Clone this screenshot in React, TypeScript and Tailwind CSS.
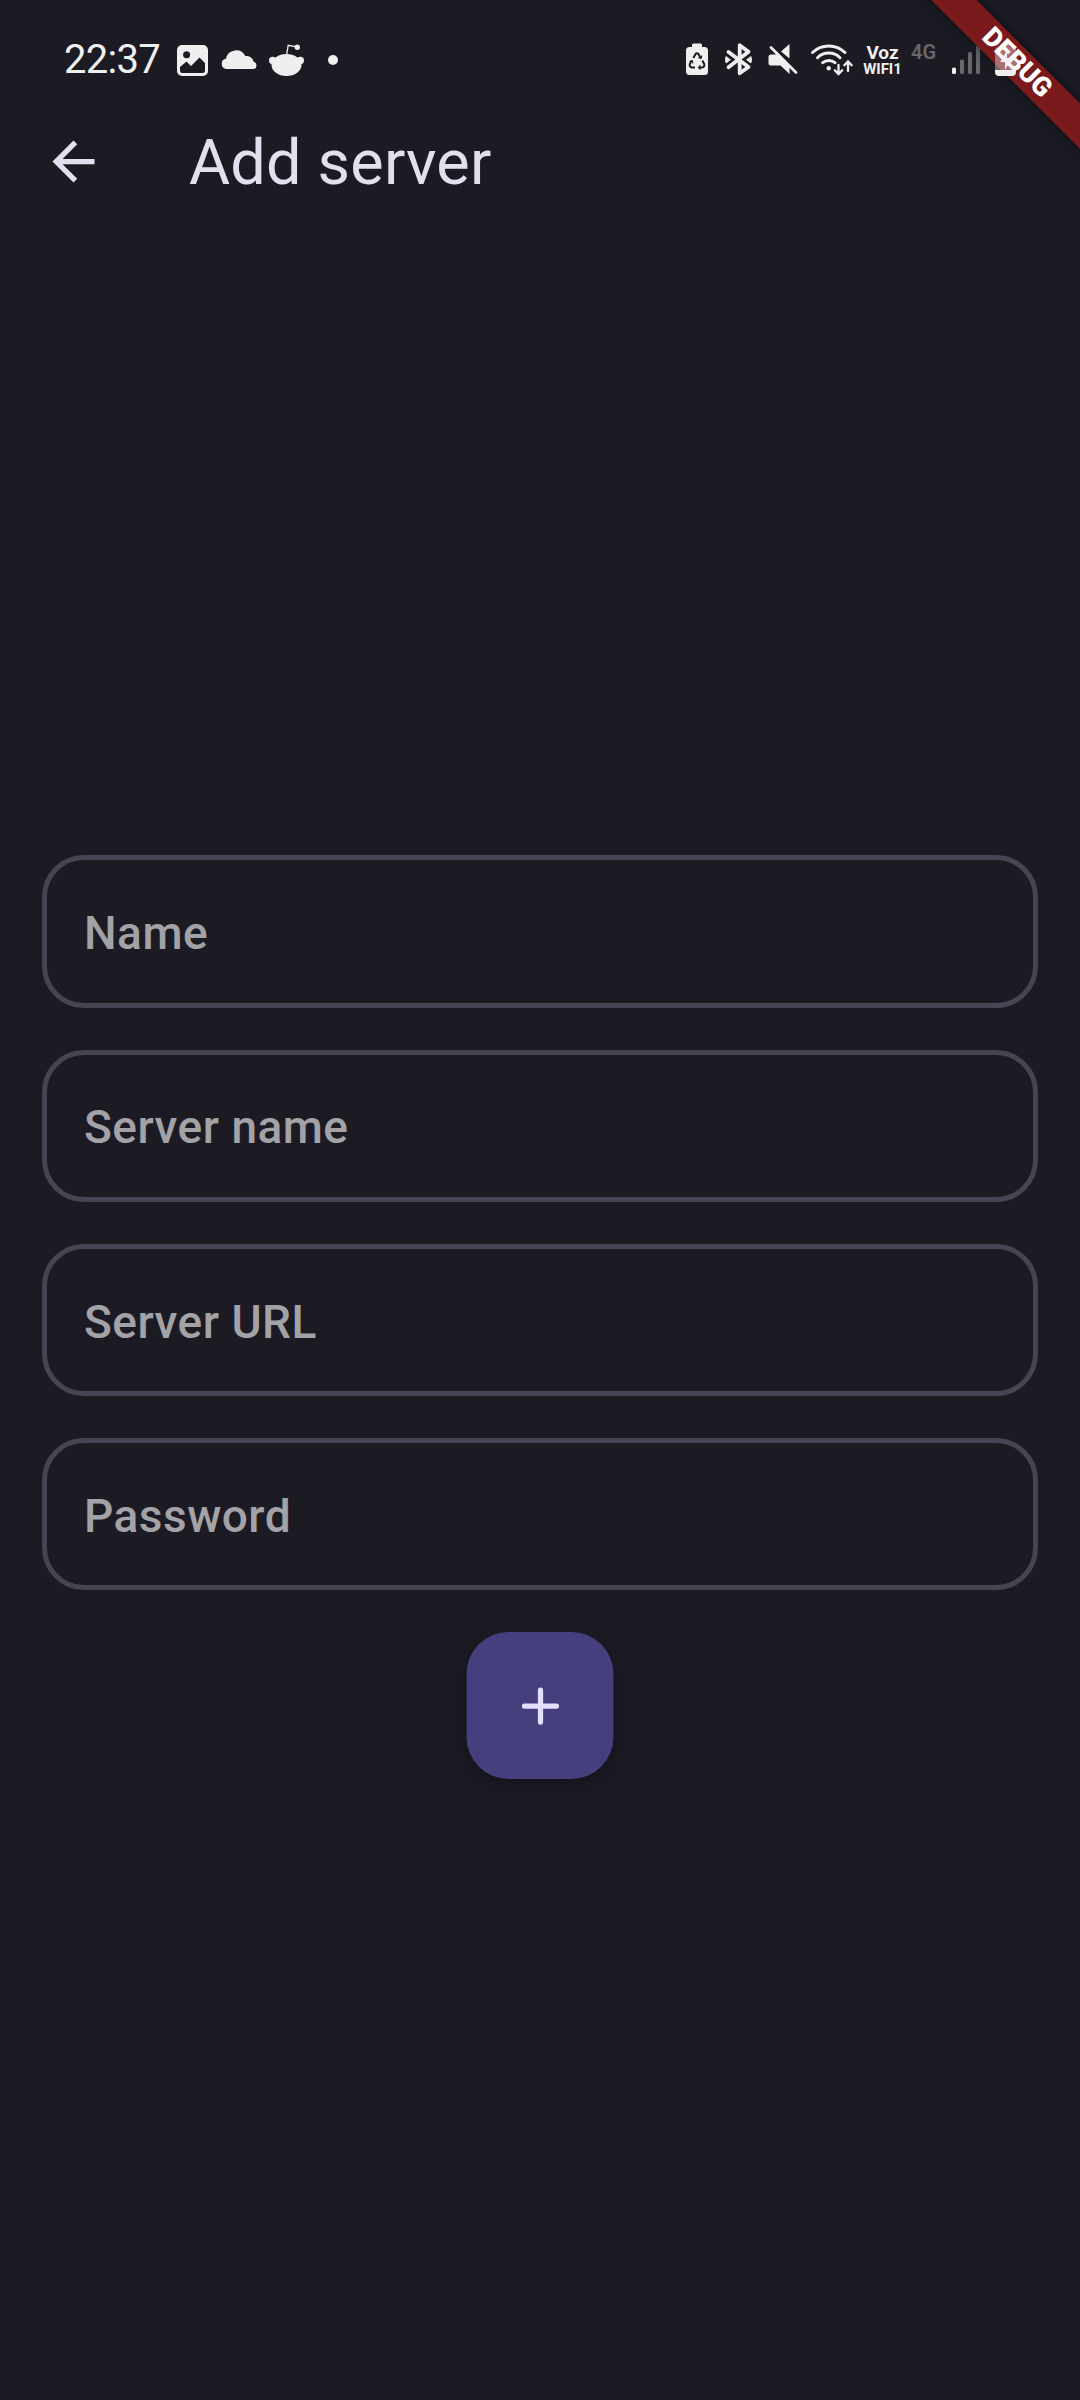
import React from 'react';

function LeftIcons() {
  return (
    <svg className="block h-[80px] w-[188px]" viewBox="168 20 188 80" fill="#efefef">
      <path
        fillRule="evenodd"
        d="M182 45h21a5 5 0 0 1 5 5v21a5 5 0 0 1-5 5h-21a5 5 0 0 1-5-5V50a5 5 0 0 1 5-5ZM186.600 51.200a3.500 3.500 0 1 0 0 7a3.500 3.500 0 1 0 0-7ZM180 67v3.500a2.500 2.500 0 0 0 2.500 2.500h20a2.500 2.500 0 0 0 2.500-2.500V63l-5.500-5.500L191 66l-4.500-4.500Z"
      />
      <path d="M226.500 69a5.200 5.200 0 0 1-.5-10.300a10.300 10.300 0 0 1 19.300-2.700a7.500 7.500 0 0 1 8.400 5.800a3.700 3.700 0 0 1 0 7.200Z" />
      <ellipse cx="286.500" cy="65" rx="15" ry="11" />
      <circle cx="272.700" cy="60.500" r="3.700" />
      <circle cx="300.300" cy="60.500" r="3.700" />
      <circle cx="297.300" cy="47.300" r="2.700" />
      <path d="M286.600 55l1.600-9.700 8.500 1.500" fill="none" stroke="#efefef" strokeWidth="1.300" />
      <circle cx="333" cy="60" r="5" />
    </svg>
  );
}

function RightIcons() {
  return (
    <svg className="block h-[80px] w-[178px]" viewBox="680 20 178 80" fill="#efefef">
      <path d="M693.500 43.500h7a1.500 1.500 0 0 1 1.500 1.500v2h2.500a3.500 3.500 0 0 1 3.500 3.500v21a3.500 3.500 0 0 1-3.500 3.500h-15a3.500 3.500 0 0 1-3.500-3.500v-21a3.500 3.500 0 0 1 3.500-3.500h2.500v-2a1.500 1.500 0 0 1 1.500-1.500Z" />
      <g fill="none" stroke="#1c1b24" strokeWidth="2">
        <path d="M693.300 58l2.300-4q1.400-1.700 2.800 0l2.300 4M702.300 60.500l1.900 3.500q.8 3-2 3.400h-3.200M695 67.400h-3.200q-2.800-.4-2-3.400l1.900-3.500" />
        <path d="M698.300 57.800l3 .5.500-2.800M700.500 65.200l-2 2.200 2 2.100M689.700 61.500l2.500-.8.700 2.600" strokeWidth="1.100" />
      </g>
      <path
        d="M728.500 52L748.500 67L739.700 73.300V45.200L748.500 51.800L728.500 67.200"
        fill="none"
        stroke="#efefef"
        strokeWidth="3.800"
        strokeLinecap="round"
        strokeLinejoin="round"
      />
      <path d="M726 56l5 3.700-5 3.700q-2-3.700 0-7.400ZM751 56l-5 3.700 5 3.700q2-3.700 0-7.400Z" />
      <path d="M771 54.500h6.500l12 11.500V74l-9-8.500H771q-2.500 0-2.500-2.500v-6q0-2.500 2.500-2.500ZM781 51.500l8.500-7.500V58.500Z" />
      <path d="M771 47.500L796 72.500" fill="none" stroke="#efefef" strokeWidth="2.700" strokeLinecap="round" />
      <g fill="none" stroke="#efefef" strokeWidth="3" strokeLinecap="round">
        <path d="M812.500 52.500a23.500 23.500 0 0 1 32.500 0M817.500 57.700a16 16 0 0 1 22.500 0M822.700 62.700a9.500 9.500 0 0 1 12.300 0" />
        <path d="M838.500 65V73.500M834.800 70.200l3.700 3.800 3.700-3.800M848 71V62M844.300 65.300l3.700-3.800 3.700 3.800" strokeWidth="2.300" />
      </g>
      <circle cx="828.700" cy="68.200" r="2.200" />
    </svg>
  );
}

function Signal() {
  return (
    <svg className="block h-[80px] w-[40px]" viewBox="945 20 40 80" fill="#efefef">
      <rect x="952" y="67.500" width="4" height="6.500" rx="1.500" />
      <g opacity="0.36">
        <rect x="960" y="59.500" width="4" height="14.500" rx="1.500" />
        <rect x="968" y="52" width="4" height="22" rx="1.500" />
        <rect x="976" y="45" width="4" height="29" rx="1.500" />
      </g>
    </svg>
  );
}

function StatusBar() {
  return (
    <div className="flex h-[120px] items-start pl-[64px] pt-[20px] text-[#efefef]">
      <div className="w-[104px] text-[40px] leading-[80px] tracking-[-0.700px]">22:37</div>
      <LeftIcons />
      <div className="ml-[324px]">
        <RightIcons />
      </div>
      <div className="ml-[3px] w-[43px] whitespace-nowrap pt-[23px] text-center font-bold">
        <div className="text-[19px] leading-[20px]">Voz</div>
        <div className="text-[15px] leading-[13px]">WIFI1</div>
      </div>
      <div className="ml-[7px] w-[34px] pt-[22px] text-[20px] font-semibold leading-[20px] text-[#69676e]">4G</div>
      <Signal />
    </div>
  );
}

function DebugBanner() {
  return (
    <div className="pointer-events-none absolute right-0 top-0 h-[220px] w-[220px] overflow-hidden">
      <div className="absolute left-[-43px] top-[47.250px] flex h-[31.500px] w-[400px] rotate-45 items-center justify-center bg-[#7a1a1d] text-[26.800px] font-black leading-none text-white shadow-[0_0_16px_rgba(0,0,0,0.5)]">
        DEBUG
      </div>
      <svg className="absolute left-[130px] top-[40px] h-[40px] w-[40px]" viewBox="990 40 40 40" fill="#efefef">
        <path
          fillRule="evenodd"
          fillOpacity="0.4"
          d="M1001 44h9v3h2a4 4 0 0 1 4 4V70H995V51a4 4 0 0 1 4-4h2ZM1007 50l-7 12h5v8l7-12h-5Z"
        />
        <path d="M1007 50l-7 12h5v8l7-12h-5Z" />
        <path d="M995 70h21v2a4 4 0 0 1-4 4h-13a4 4 0 0 1-4-4Z" />
      </svg>
    </div>
  );
}

function Field({ label }: { label: string }) {
  return (
    <div className="flex h-[152.250px] items-center rounded-[42px] border-[5px] border-[#474553] pl-[37px] pt-[4.500px] text-[46px] font-medium tracking-[0.480px] text-[#a3a2a6]">
      {label}
    </div>
  );
}

export default function App() {
  return (
    <div className="relative h-[2400px] w-[1080px] overflow-hidden bg-[#1c1b24] font-[Roboto,sans-serif]">
      <StatusBar />
      <header className="flex h-[84px] items-center">
        <svg className="mb-[2px] ml-[42px] block h-[63px] w-[63px]" viewBox="0 0 24 24" fill="#e4dfef">
          <path d="M20 11H7.830l5.590-5.590L12 4l-8 8 8 8 1.410-1.410L7.830 13H20v-2z" />
        </svg>
        <h1 className="ml-[84px] pt-[2px] text-[63px] leading-[82px] tracking-[0.200px] text-[#e4dfef]">Add server</h1>
      </header>
      <main className="flex flex-col gap-[42px] px-[42px] pt-[651.250px]">
        <Field label="Name" />
        <Field label="Server name" />
        <Field label="Server URL" />
        <Field label="Password" />
        <button className="-translate-x-[0.500px] flex h-[147px] w-[147px] items-center justify-center self-center rounded-[42px] bg-[#453f7e] shadow-[0_8px_20px_rgba(0,0,0,0.3)]">
          <svg className="ml-px mt-px h-[38px] w-[38px]" viewBox="0 0 38 38" fill="none" stroke="#e4dfff" strokeWidth="5.250" strokeLinecap="round">
            <path d="M3 19H35M19 3V35" />
          </svg>
        </button>
      </main>
      <DebugBanner />
    </div>
  );
}
